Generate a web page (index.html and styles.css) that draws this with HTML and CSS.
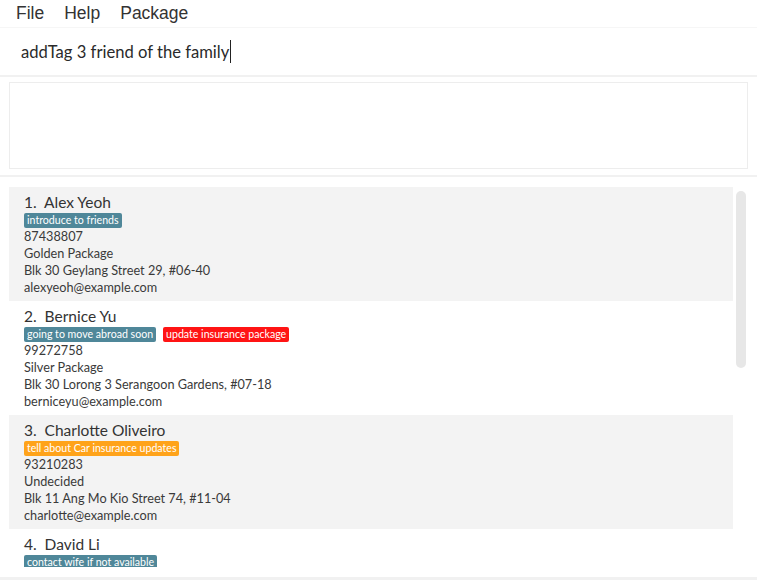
FILE: index.html
```html
<!DOCTYPE html>
<html>
<head>
<meta charset="utf-8">
<link rel="stylesheet" href="styles.css">
</head>
<body>
<div class="app">
  <nav class="menubar">
    <span class="menu-item">File</span>
    <span class="menu-item">Help</span>
    <span class="menu-item">Package</span>
  </nav>
  <div class="command">
    <span class="command-text">addTag 3 friend of the family</span><span class="caret"></span>
  </div>
  <div class="divider"></div>
  <div class="result-pane">
    <div class="result-box"></div>
  </div>
  <div class="divider"></div>
  <div class="list-pane">
    <div class="list">
      <div class="card card-alt">
        <div class="name">1.&nbsp; Alex Yeoh</div>
        <div class="tags"><span class="tag tag-teal">introduce to friends</span></div>
        <div class="line">87438807</div>
        <div class="line">Golden Package</div>
        <div class="line">Blk 30 Geylang Street 29, #06-40</div>
        <div class="line">alexyeoh@example.com</div>
      </div>
      <div class="card">
        <div class="name">2.&nbsp; Bernice Yu</div>
        <div class="tags"><span class="tag tag-teal">going to move abroad soon</span><span class="tag tag-red">update insurance package</span></div>
        <div class="line">99272758</div>
        <div class="line">Silver Package</div>
        <div class="line">Blk 30 Lorong 3 Serangoon Gardens, #07-18</div>
        <div class="line">berniceyu@example.com</div>
      </div>
      <div class="card card-alt">
        <div class="name">3.&nbsp; Charlotte Oliveiro</div>
        <div class="tags"><span class="tag tag-orange">tell about Car insurance updates</span></div>
        <div class="line">93210283</div>
        <div class="line">Undecided</div>
        <div class="line">Blk 11 Ang Mo Kio Street 74, #11-04</div>
        <div class="line">charlotte@example.com</div>
      </div>
      <div class="card">
        <div class="name">4.&nbsp; David Li</div>
        <div class="tags"><span class="tag tag-teal">contact wife if not available</span></div>
      </div>
    </div>
    <div class="scrollbar"><div class="thumb"></div></div>
  </div>
  <div class="statusbar"></div>
</div>
</body>
</html>
```

FILE: styles.css
```css
html, body {
  margin: 0;
  padding: 0;
  background: #ffffff;
}
body {
  font-family: Lato, "Open Sans", sans-serif;
  color: #3a3a3a;
}
.app {
  width: 757px;
  height: 580px;
  display: flex;
  flex-direction: column;
  overflow: hidden;
}
.menubar {
  height: 28px;
  display: flex;
  align-items: center;
  gap: 20px;
  padding-left: 16px;
  border-bottom: 1px solid #f6f6f6;
  box-sizing: border-box;
}
.menu-item {
  font-family: "Liberation Sans", Arial, sans-serif;
  font-size: 17.5px;
  color: #333;
}
.command {
  height: 47px;
  display: flex;
  align-items: center;
  padding-left: 21px;
  box-sizing: border-box;
}
.command-text {
  font-size: 16.6px;
  color: #2a2a2a;
}
.caret {
  width: 1px;
  height: 23px;
  background: #222;
  margin-left: 1px;
}
.divider {
  height: 2px;
  background: #f1f1f1;
}
.result-pane {
  height: 98px;
  padding: 5px 9px 6px 9px;
  box-sizing: border-box;
}
.result-box {
  height: 100%;
  border: 1px solid #ededed;
  box-sizing: border-box;
}
.list-pane {
  height: 400px;
  display: flex;
  padding: 10px 0 0 9px;
  box-sizing: border-box;
  border-bottom: 10px solid #fff;
}
.list {
  width: 724px;
  height: 380px;
  overflow: hidden;
}
.card {
  height: 114px;
  padding: 4px 0 0 15px;
  box-sizing: border-box;
}
.card-alt {
  background: #f3f3f3;
}
.name {
  font-size: 15.5px;
  line-height: 22px;
  color: #333;
}
.tags {
  display: flex;
  gap: 7px;
  height: 15px;
}
.tag {
  font-size: 10.6px;
  line-height: 15px;
  height: 15px;
  padding: 0 3px;
  border-radius: 2px;
  color: #fff;
}
.tag-teal { background: #4f8799; }
.tag-red { background: #ff1414; }
.tag-orange { background: #ffa31a; }
.line {
  font-size: 12.7px;
  line-height: 17px;
  color: #3a3a3a;
}
.scrollbar {
  width: 12px;
  margin-left: 3px;
  padding-top: 4px;
}
.thumb {
  width: 10px;
  height: 177px;
  background: #e7e7e7;
  border-radius: 5px;
}
.statusbar {
  height: 3px;
  background: #f1f1f1;
}
```
